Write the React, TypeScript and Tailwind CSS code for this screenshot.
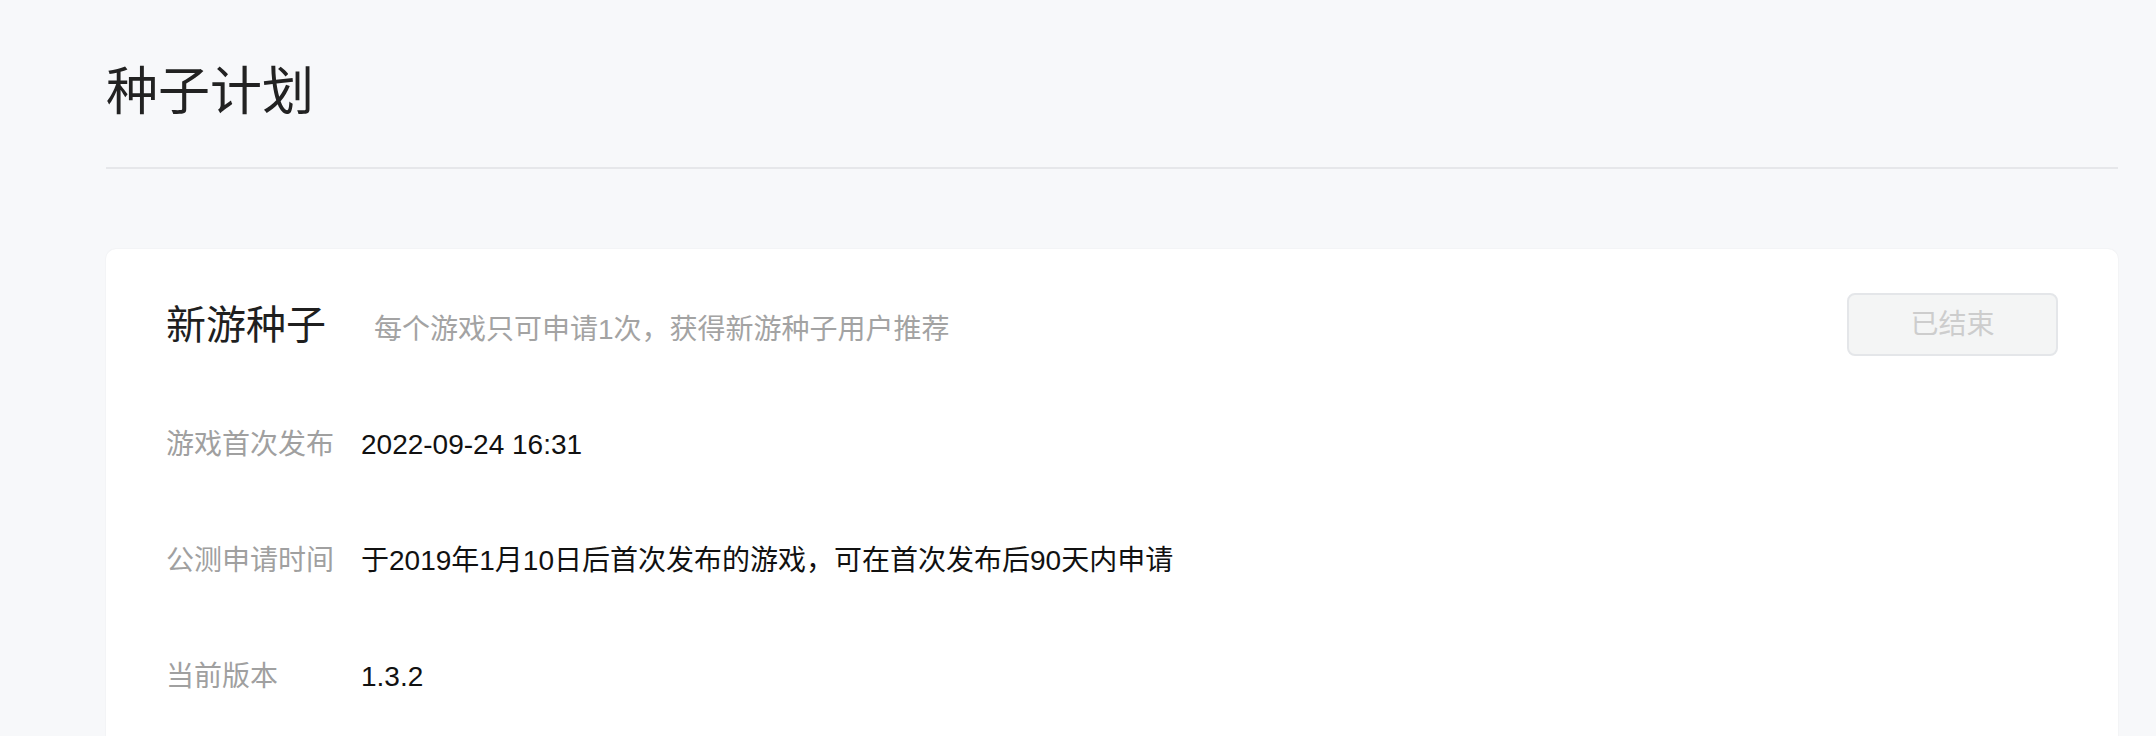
const font = "font-['Liberation_Sans','Noto_Sans_CJK_SC',sans-serif]";

type InfoRow = {
  label: string;
  value: string;
};

const rows: InfoRow[] = [
  { label: "游戏首次发布", value: "2022-09-24 16:31" },
  { label: "公测申请时间", value: "于2019年1月10日后首次发布的游戏，可在首次发布后90天内申请" },
  { label: "当前版本", value: "1.3.2" },
];

export default function App() {
  return (
    <div className={`${font} h-screen overflow-hidden bg-[#f7f8fa] pl-[106px] pr-[38px]`}>
      <h1 className="pt-[66px] text-[52px] leading-[52px] font-normal text-[#222222]">种子计划</h1>
      <div className="mt-[49px] h-[2px] bg-[#e6e7ea]" />

      <section className="mt-[80px] rounded-[10px] bg-white px-[60px] pt-[44px] pb-[120px] shadow-[0_0_2px_rgba(0,0,0,0.07)]">
        <div className="flex h-[63px] items-center justify-between">
          <div className="flex items-baseline">
            <h2 className="text-[40px] leading-[40px] font-normal text-[#1f1f1f]">新游种子</h2>
            <p className="ml-[48px] text-[28px] leading-[28px] text-[#a3a3a3]">
              每个游戏只可申请1次，获得新游种子用户推荐
            </p>
          </div>
          <button
            type="button"
            disabled
            className="h-[63px] w-[211px] rounded-[8px] border-2 border-[#e4e6e9] bg-[#f4f5f5] text-[28px] text-[#cdcdcd]"
          >
            已结束
          </button>
        </div>

        <div className="mt-[69px] flex flex-col gap-[76px]">
          {rows.map((row) => (
            <div key={row.label} className="flex h-[40px] items-center text-[28px] leading-[40px]">
              <span className="w-[195px] shrink-0 text-[#a0a0a0]">{row.label}</span>
              <span className="text-[#111111]">{row.value}</span>
            </div>
          ))}
        </div>
      </section>
    </div>
  );
}
